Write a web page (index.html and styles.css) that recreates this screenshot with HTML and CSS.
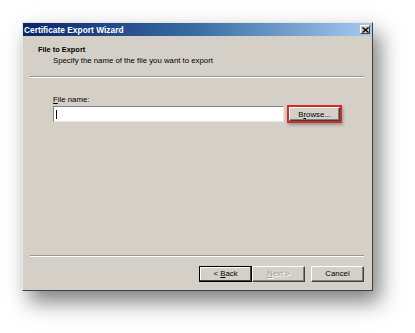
FILE: index.html
```html
<!DOCTYPE html>
<html lang="en">
	<head>
		<meta charset="UTF-8" />
		<title>Certificate Export Wizard</title>
		<link rel="stylesheet" href="styles.css">
	</head>
	<body>
		<div class="window">
			<div class="title-bar">
				<span class="title">Certificate Export Wizard</span>
				<span class="close-btn">
					<svg width="7" height="6" viewBox="0 0 7 6">
						<path d="M0.5 0.5 L6.5 5.5 M6.5 0.5 L0.5 5.5" stroke="#000" stroke-width="1.4" />
					</svg>
				</span>
			</div>

			<div class="header">
				<div class="header-title">File to Export</div>
				<div class="header-sub">Specify the name of the file you want to export</div>
			</div>
			<div class="separator"></div>

			<div class="content">
				<div class="label"><u>F</u>ile name:</div>
				<div class="file-row">
					<div class="file-input"><span class="caret"></span></div>
					<div class="highlight">
						<button class="btn browse">B<u>r</u>owse...</button>
					</div>
				</div>
			</div>

			<div class="separator"></div>
			<div class="footer">
				<button class="btn back default">&lt; <u>B</u>ack</button>
				<button class="btn next" disabled><u>N</u>ext &gt;</button>
				<button class="btn cancel">Cancel</button>
			</div>
		</div>
	</body>
</html>
```

FILE: styles.css
```css
body {
	margin: 0;
	width: 415px;
	height: 333px;
	background: #fff;
	font-family: 'Liberation Sans', Arial, sans-serif;
	font-size: 7.8px;
	color: #000;
	overflow: hidden;
}
.window {
	box-sizing: border-box;
	margin: 22px 0 0 22px;
	width: 351px;
	height: 269px;
	background: #d4d0c8;
	border-top: 1px solid #e8e6e0;
	border-left: 1px solid #e8e6e0;
	border-right: 1px solid #404040;
	border-bottom: 1px solid #404040;
	box-shadow: 7px 11px 20px rgba(0, 0, 0, 0.5);
	display: flex;
	flex-direction: column;
}
.title-bar {
	height: 13px;
	background: linear-gradient(to right, #0a246a, #3a6ea5 50%, #a6caf0);
	display: flex;
	align-items: center;
	justify-content: space-between;
	padding: 0 2px 0 1px;
}
.title {
	color: #fff;
	font-weight: bold;
	font-size: 8.4px;
}
.close-btn {
	box-sizing: border-box;
	width: 10px;
	height: 9px;
	background: #d4d0c8;
	border-top: 1px solid #fff;
	border-left: 1px solid #fff;
	border-right: 1px solid #404040;
	border-bottom: 1px solid #404040;
	display: flex;
	align-items: center;
	justify-content: center;
}
.header {
	height: 40px;
	padding: 9px 0 0 15px;
	box-sizing: border-box;
}
.header-title {
	font-weight: bold;
	font-size: 7.4px;
}
.header-sub {
	margin: 2px 0 0 15px;
}
.separator {
	margin: 0 8px 0 7px;
	height: 0;
	border-top: 1px solid #9a978f;
	border-bottom: 1px solid #fff;
}
.content {
	flex: 1;
	padding: 17px 0 0 30px;
}
.label {
	margin-bottom: 1px;
}
.file-row {
	display: flex;
	align-items: center;
	gap: 3px;
}
.file-input {
	box-sizing: border-box;
	width: 231px;
	height: 16px;
	background: #fff;
	border-top: 1px solid #808080;
	border-left: 1px solid #808080;
	border-right: 1px solid #e8e6e0;
	border-bottom: 1px solid #e8e6e0;
	padding: 3px 2px;
}
.caret {
	display: block;
	width: 1px;
	height: 9px;
	background: #000;
}
.highlight {
	border: 2px solid #d42a2a;
	padding: 0;
	box-shadow: 1px 2px 3px rgba(0, 0, 0, 0.3);
}
.btn {
	box-sizing: border-box;
	height: 16px;
	padding: 0;
	background: #d4d0c8;
	font-family: inherit;
	font-size: 7.8px;
	color: #000;
	border-top: 1px solid #fff;
	border-left: 1px solid #fff;
	border-right: 1px solid #404040;
	border-bottom: 1px solid #404040;
	box-shadow: inset -1px -1px 0 #808080;
}
.browse {
	display: block;
	width: 51px;
	height: 14px;
}
.footer {
	height: 33px;
	display: flex;
	align-items: center;
	justify-content: flex-end;
	padding: 0 8px 0 0;
}
.back, .next {
	width: 53px;
}
.cancel {
	width: 53px;
	margin-left: 6px;
}
.default {
	border: 1px solid #000;
	box-shadow: inset -1px -1px 0 #404040, inset 1px 1px 0 #fff;
}
.next:disabled {
	color: #a09d96;
	text-shadow: 1px 1px 0 #fff;
}
```
